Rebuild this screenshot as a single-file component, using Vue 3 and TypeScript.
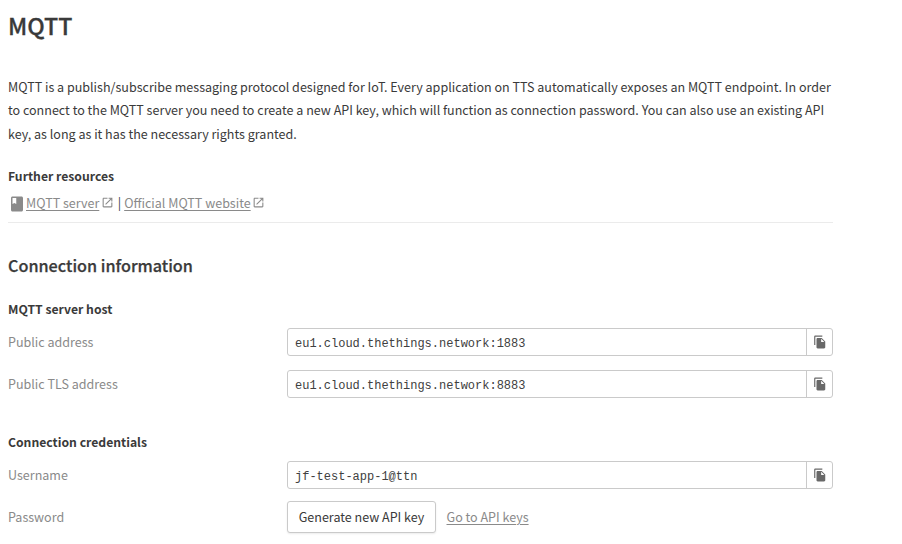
<script setup lang="ts">
interface Field {
  label: string
  value: string
}

const intro: string[] = [
  'MQTT is a publish/subscribe messaging protocol designed for IoT. Every application on TTS automatically exposes an MQTT endpoint. In order',
  'to connect to the MQTT server you need to create a new API key, which will function as connection password. You can also use an existing API',
  'key, as long as it has the necessary rights granted.',
]

const hosts: Field[] = [
  { label: 'Public address', value: 'eu1.cloud.thethings.network:1883' },
  { label: 'Public TLS address', value: 'eu1.cloud.thethings.network:8883' },
]

const credentials: Field[] = [{ label: 'Username', value: 'jf-test-app-1@ttn' }]

const copyValue = (value: string): void => {
  void navigator.clipboard?.writeText(value)
}
</script>

<template>
  <main class="page">
    <h1 class="title">MQTT</h1>
    <p class="intro">
      <span v-for="line in intro" :key="line" class="intro-line">{{ line }}</span>
    </p>

    <h4 class="subtitle further">Further resources</h4>
    <div class="resources">
      <svg class="book" viewBox="0 0 24 24"><path d="M18 2H6c-1.1 0-2 .9-2 2v16c0 1.1.9 2 2 2h12c1.1 0 2-.9 2-2V4c0-1.1-.9-2-2-2zM6 4h5v8l-2.500-1.500L6 12V4z" /></svg>
      <a class="link server" href="#">MQTT server</a>
      <svg class="external" viewBox="0 0 24 24"><path d="M19 19H5V5h7V3H5c-1.110 0-2 .9-2 2v14c0 1.100.890 2 2 2h14c1.100 0 2-.9 2-2v-7h-2v7zM14 3v2h3.590l-9.830 9.830 1.410 1.410L19 6.410V10h2V3h-7z" /></svg>
      <span class="separator">|</span>
      <a class="link website" href="#">Official MQTT website</a>
      <svg class="external" viewBox="0 0 24 24"><path d="M19 19H5V5h7V3H5c-1.110 0-2 .9-2 2v14c0 1.100.890 2 2 2h14c1.100 0 2-.9 2-2v-7h-2v7zM14 3v2h3.590l-9.830 9.830 1.410 1.410L19 6.410V10h2V3h-7z" /></svg>
    </div>
    <hr class="rule" />

    <h2 class="section">Connection information</h2>

    <h4 class="subtitle">MQTT server host</h4>
    <div class="rows">
      <div v-for="field in hosts" :key="field.label" class="row">
        <span class="label">{{ field.label }}</span>
        <div class="field">
          <span class="value">{{ field.value }}</span>
          <button class="copy" type="button" @click="copyValue(field.value)">
            <svg viewBox="0 0 24 24"><path d="M16 1H4c-1.100 0-2 .9-2 2v14h2V3h12V1zm-1 4l6 6v10c0 1.100-.9 2-2 2H7.990C6.890 23 6 22.100 6 21l.010-14c0-1.100.890-2 1.990-2h7zm-1 7h5.500L14 6.500V12z" /></svg>
          </button>
        </div>
      </div>
    </div>

    <h4 class="subtitle credentials">Connection credentials</h4>
    <div class="rows">
      <div v-for="field in credentials" :key="field.label" class="row">
        <span class="label">{{ field.label }}</span>
        <div class="field">
          <span class="value">{{ field.value }}</span>
          <button class="copy" type="button" @click="copyValue(field.value)">
            <svg viewBox="0 0 24 24"><path d="M16 1H4c-1.100 0-2 .9-2 2v14h2V3h12V1zm-1 4l6 6v10c0 1.100-.9 2-2 2H7.990C6.890 23 6 22.100 6 21l.010-14c0-1.100.890-2 1.990-2h7zm-1 7h5.500L14 6.500V12z" /></svg>
          </button>
        </div>
      </div>
    </div>
    <div class="row password">
      <span class="label">Password</span>
      <button class="generate" type="button">Generate new API key</button>
      <a class="link keys" href="#">Go to API keys</a>
    </div>
  </main>
</template>

<style>
body {
  background: #fff;
  overflow: hidden;
}
</style>

<style scoped>
.page {
  box-sizing: border-box;
  width: 833px;
  height: 544px;
  padding: 7px 0 0 8px;
  font-family: 'Noto Sans CJK SC', 'Open Sans', sans-serif;
  font-size: 12.54px;
  line-height: 20px;
  color: #3a3a3a;
  white-space: nowrap;
}

.title {
  margin: 0;
  height: 36px;
  font-size: 23.2px;
  line-height: 36px;
  font-weight: 500;
  -webkit-text-stroke: 0.3px #3a3a3a;
}

.intro {
  display: flex;
  flex-direction: column;
  margin: 32px 0 0;
  line-height: 23px;
}

.intro-line:last-child {
  margin-top: 1px;
}

.subtitle {
  margin: 0;
  font-size: 12.2px;
  line-height: 20px;
  font-weight: 600;
}

.further {
  margin-top: 21px;
}

.resources {
  display: flex;
  align-items: center;
  height: 20px;
  margin-top: 7px;
}

.link {
  color: #8a8a8a;
  text-decoration: underline;
  text-decoration-thickness: 1px;
  text-underline-offset: 2px;
}

.book {
  width: 18px;
  height: 18px;
  margin-top: 1px;
  fill: #8a8a8a;
}

.external {
  width: 13px;
  height: 13px;
  margin: 0 0 1px 1.5px;
  fill: #8a8a8a;
}

.separator {
  margin: 0 3px 0 4px;
}

.rule {
  height: 1px;
  margin: 9px 0 0;
  border: 0;
  background: #ebebeb;
}

.section {
  margin: 28px 0 0;
  font-size: 16.2px;
  line-height: 28px;
  font-weight: 500;
  -webkit-text-stroke: 0.25px #3a3a3a;
}

.section + .subtitle {
  margin-top: 20px;
}

.rows {
  display: flex;
  flex-direction: column;
  gap: 14px;
  margin-top: 9px;
}

.row {
  display: grid;
  grid-template-columns: 279px 1fr;
  align-items: center;
}

.label {
  color: #8a8a8a;
}

.field {
  box-sizing: border-box;
  display: flex;
  height: 28px;
  border: 1px solid #cacaca;
  border-radius: 3px;
}

.value {
  flex: 1;
  padding: 4px 0 0 7px;
  font-family: 'Liberation Mono', monospace;
  font-size: 12px;
  line-height: 22px;
  color: #404040;
}

.copy {
  box-sizing: border-box;
  display: flex;
  align-items: center;
  justify-content: center;
  width: 26px;
  padding: 0;
  border: 0;
  border-left: 1px solid #cacaca;
  background: none;
}

.copy svg {
  width: 14px;
  height: 14px;
  fill: #686868;
}

.credentials {
  margin-top: 34px;
}

.password {
  grid-template-columns: 279px 149px auto;
  justify-content: start;
  margin-top: 12px;
}

.generate {
  height: 32px;
  padding: 0;
  border: 1px solid #cacaca;
  border-radius: 3px;
  background: #fff;
  box-shadow: 0 1px 2px rgba(0, 0, 0, 0.08);
  font: inherit;
  color: inherit;
}

.keys {
  margin-left: 10.5px;
}
</style>
